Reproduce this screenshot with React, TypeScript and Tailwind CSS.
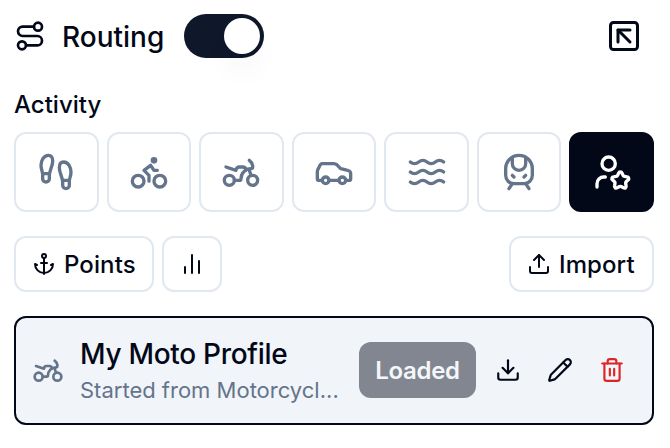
import {
  Anchor,
  Bike,
  Car,
  ChartNoAxesColumn,
  Download,
  Footprints,
  Motorbike,
  Pencil,
  Route,
  SquareArrowUpLeft,
  TrainFront,
  Trash2,
  Upload,
  UserStar,
  Waves,
} from 'lucide-react';
import { useState } from 'react';

const activities = [
  { id: 'walking', icon: Footprints },
  { id: 'cycling', icon: Bike },
  { id: 'motorcycle', icon: Motorbike },
  { id: 'car', icon: Car },
  { id: 'water', icon: Waves },
  { id: 'railway', icon: TrainFront },
  { id: 'custom', icon: UserStar },
];

const outlineButton =
  'flex h-14 items-center rounded-xl border-2 border-[#e2e8f0] bg-white text-[24px] font-medium tracking-[0.1px]';

function Switch({ checked, onChange }: { checked: boolean; onChange: () => void }) {
  return (
    <button
      role="switch"
      aria-checked={checked}
      onClick={onChange}
      className={`flex h-11 w-20 items-center rounded-full px-1 ${
        checked ? 'justify-end bg-[#0f172a]' : 'justify-start bg-[#e2e8f0]'
      }`}
    >
      <span className="size-9 rounded-full bg-white shadow-[0_20px_30px_-6px_rgb(0_0_0/0.07)]" />
    </button>
  );
}

function ProfileCard() {
  return (
    <div className="mt-6 flex h-[109px] items-center rounded-xl border-2 border-[#020817] bg-[#f1f4f9] pb-px pl-4">
      <Motorbike className="size-8 shrink-0 text-[#64748b]" />
      <div className="ml-4 w-[263px] pt-1">
        <p className="text-[28px] leading-9 font-medium tracking-[-0.3px]">My Moto Profile</p>
        <p className="text-[22px] leading-9 whitespace-nowrap text-[#64748b]">
          Started from Motorcycl...
        </p>
      </div>
      <button className="ml-4 h-14 w-[117px] shrink-0 rounded-xl bg-[#818691] pt-0.5 text-[24px] font-semibold tracking-[-0.3px] text-[#f4f6fa]">
        Loaded
      </button>
      <div className="ml-[19px] flex gap-[26px]">
        <Download size={26} />
        <Pencil size={26} />
        <Trash2 size={26} className="text-[#dc2626]" />
      </div>
    </div>
  );
}

export default function App() {
  const [enabled, setEnabled] = useState(true);
  const [activity, setActivity] = useState('custom');

  return (
    <div className="h-[448px] w-[670px] overflow-hidden bg-white pt-3.5 pr-4 pl-3.5 font-['Inter',sans-serif] text-[#020817]">
      <div className="flex h-11 items-center">
        <Route size={32} />
        <h2 className="mr-4 w-[122px] pt-px pl-4 text-[28px] font-medium">Routing</h2>
        <Switch checked={enabled} onChange={() => setEnabled(!enabled)} />
        <SquareArrowUpLeft size={36} className="mr-3 ml-auto" />
      </div>

      <p className="mt-[29px] mb-[9px] text-[24px] leading-9 font-medium">Activity</p>

      <div className="grid grid-cols-7 gap-2">
        {activities.map(({ id, icon: Icon }) => (
          <button
            key={id}
            onClick={() => setActivity(id)}
            className={`flex h-20 items-center justify-center rounded-xl border-2 ${
              activity === id
                ? 'border-[#020817] bg-[#020817] text-white'
                : 'border-[#e2e8f0] bg-white text-[#64748b]'
            }`}
          >
            <Icon size={40} />
          </button>
        ))}
      </div>

      <div className="mt-6 flex gap-2">
        <button className={`${outlineButton} w-[140px] gap-2 pl-4`}>
          <Anchor size={24} />
          <span className="pt-0.5">Points</span>
        </button>
        <button className={`${outlineButton} w-[60px] justify-center`}>
          <ChartNoAxesColumn size={24} />
        </button>
        <button className={`${outlineButton} ml-auto w-[145px] gap-2 pl-4`}>
          <Upload size={24} />
          <span className="pt-0.5">Import</span>
        </button>
      </div>

      <ProfileCard />
    </div>
  );
}
